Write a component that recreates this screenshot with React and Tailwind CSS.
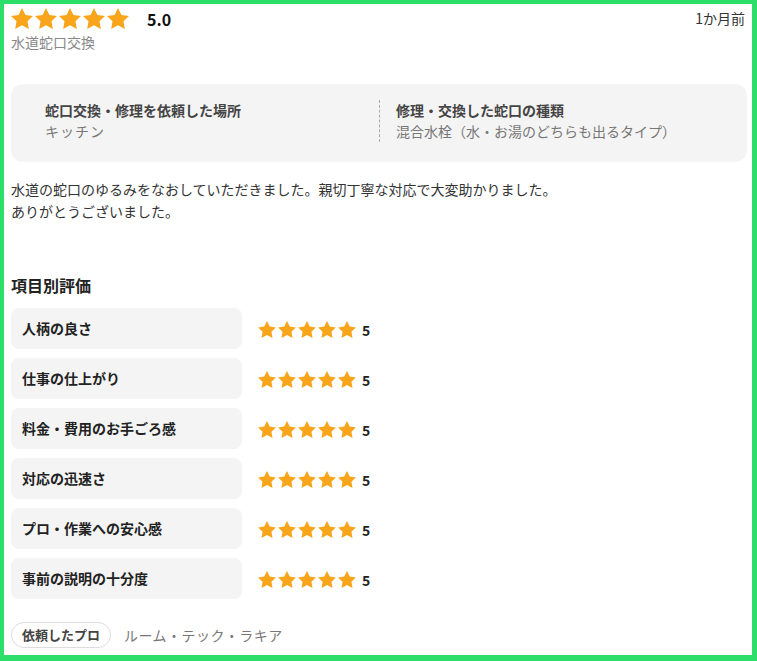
import React from "react";

const ITEMS = [
  "人柄の良さ",
  "仕事の仕上がり",
  "料金・費用のお手ごろ感",
  "対応の迅速さ",
  "プロ・作業への安心感",
  "事前の説明の十分度",
];

function Star({ className }) {
  return (
    <svg viewBox="2 2 20 19.1" className={className} fill="#f8a51b">
      <polygon points="12,2 15.09,8.26 22,9.27 17,14.14 18.18,21.02 12,17.77 5.82,21.02 7,14.14 2,9.27 8.91,8.26" />
    </svg>
  );
}

function Stars({ size, gap }) {
  return (
    <div className={`flex items-center ${gap}`}>
      {[0, 1, 2, 3, 4].map((i) => (
        <Star key={i} className={size} />
      ))}
    </div>
  );
}

export default function App() {
  return (
    <div
      className="w-[757px] h-[661px] box-border border-[#2ede6a] border-l-4 border-t-4 border-r-[5px] border-b-[6px] bg-white pl-[7px] pr-[5px] pt-[4px] overflow-hidden"
      style={{ fontFamily: '"Noto Sans CJK JP", "Noto Sans", sans-serif' }}
    >
      {/* Header */}
      <div className="flex items-start justify-between h-[24px]">
        <div className="flex items-center gap-[18px]">
          <Stars size="w-[22px] h-[21px]" gap="gap-[2px]" />
          <span className="text-[16px] font-bold text-[#111] leading-[20px]">5.0</span>
        </div>
        <span className="text-[14px] text-[#333] leading-[20px] pr-[2px]">1か月前</span>
      </div>
      <div className="text-[14px] text-[#888] leading-[20px]">水道蛇口交換</div>

      {/* Detail box */}
      <div className="mt-[32px] bg-[#f4f4f4] rounded-[12px] grid grid-cols-2 pt-4 pb-[20px]">
        <div className="pl-[34px]">
          <div className="text-[14px] font-bold text-[#444] leading-[21px]">蛇口交換・修理を依頼した場所</div>
          <div className="text-[14px] text-[#777] leading-[21px] tracking-[1px]">キッチン</div>
        </div>
        <div className="border-l border-dashed border-[#aaa] pl-[16px]">
          <div className="text-[14px] font-bold text-[#444] leading-[21px]">修理・交換した蛇口の種類</div>
          <div className="text-[14px] text-[#777] leading-[21px]">混合水栓（水・お湯のどちらも出るタイプ）</div>
        </div>
      </div>

      {/* Comment */}
      <p className="mt-[16px] text-[14px] text-[#333] leading-[22px]">
        水道の蛇口のゆるみをなおしていただきました。親切丁寧な対応で大変助かりました。
        <br />
        ありがとうございました。
      </p>

      {/* Ratings */}
      <h3 className="mt-[51px] text-[16px] font-bold text-[#222] leading-[24px]">項目別評価</h3>
      <div className="mt-[11px] flex flex-col gap-[9px]">
        {ITEMS.map((label) => (
          <div key={label} className="flex items-center gap-[16px]">
            <div className="w-[231px] h-[41px] bg-[#f4f4f4] rounded-[8px] flex items-center px-[11px] text-[14px] font-bold text-[#222]">
              {label}
            </div>
            <div className="flex items-center gap-[6px] pt-[2px]">
              <Stars size="w-[18px] h-[17px]" gap="gap-[2px]" />
              <span className="text-[14px] font-bold text-[#222] leading-[18px]">5</span>
            </div>
          </div>
        ))}
      </div>

      {/* Pro */}
      <div className="mt-[23px] flex items-center gap-[13px]">
        <span className="h-[26px] px-[10px] border border-[#ddd] rounded-full flex items-center text-[13px] font-bold text-[#444]">
          依頼したプロ
        </span>
        <span className="text-[14px] text-[#777] tracking-[0.5px]">ルーム・テック・ラキア</span>
      </div>
    </div>
  );
}
